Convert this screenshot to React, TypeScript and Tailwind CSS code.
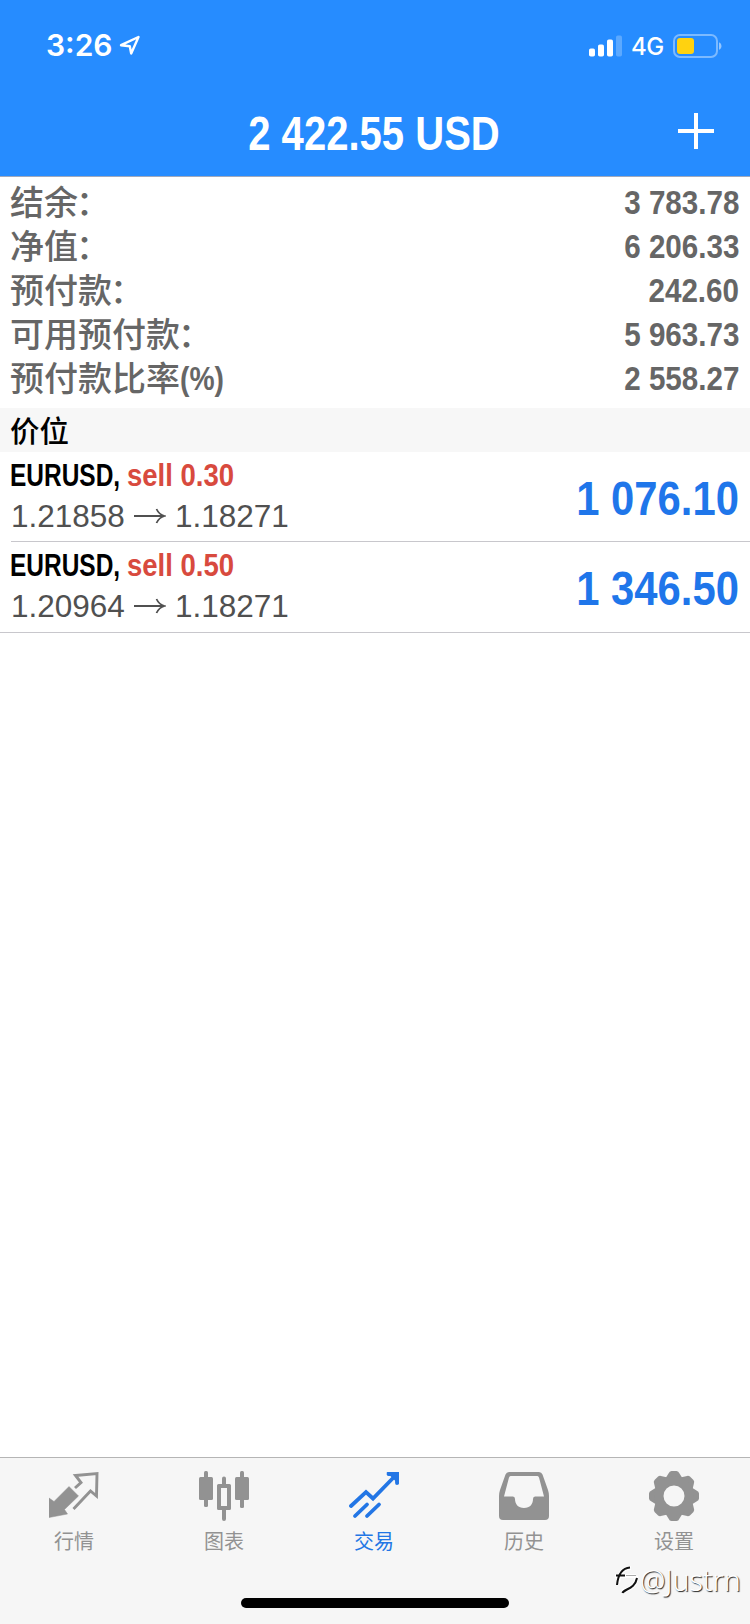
import React, { ReactNode } from 'react';

interface RowProps {
  label: string;
  suffix: string;
  value: string;
}

const balances: RowProps[] = [
  { label: '结余', suffix: '：', value: '3 783.78' },
  { label: '净值', suffix: '：', value: '6 206.33' },
  { label: '预付款', suffix: '：', value: '242.60' },
  { label: '可用预付款', suffix: '：', value: '5 963.73' },
  { label: '预付款比率', suffix: '(%)', value: '2 558.27' },
];

const positions = [
  { symbol: 'EURUSD,', side: 'sell 0.30', open: '1.21858', current: '1.18271', profit: '1 076.10' },
  { symbol: 'EURUSD,', side: 'sell 0.50', open: '1.20964', current: '1.18271', profit: '1 346.50' },
];

function StatusBar() {
  return (
    <div className="flex h-[92px] items-center justify-between pl-[46px] pr-[27px]">
      <div className="flex items-center">
        <span className="w-[69px] whitespace-nowrap pb-[2px] font-[Inter,sans-serif] text-[30px] font-semibold leading-none">3:26</span>
        <svg className="ml-[4px] h-[22px] w-[22px]" viewBox="0 0 22 22" fill="none" stroke="currentColor" strokeWidth="2.400" strokeLinejoin="round">
          <path d="M2 10.200 19.500 2 12.200 18.400 10.800 11.200Z" />
        </svg>
      </div>
      <div className="flex items-center">
        <svg className="h-[22px] w-[34px]" viewBox="0 0 34 22" fill="currentColor">
          <rect x="0" y="13.500" width="6" height="8" rx="1.800" />
          <rect x="9" y="9.500" width="6" height="12" rx="1.800" />
          <rect x="18" y="4.500" width="6" height="17" rx="1.800" />
          <rect x="27" y="0.500" width="6" height="21" rx="1.800" opacity="0.25" />
        </svg>
        <span className="ml-[8px] w-[33px] whitespace-nowrap pt-[2px] font-[Inter,sans-serif] text-[24px] font-medium leading-none tracking-[-0.5px]">4G</span>
        <svg className="ml-[9px] h-[24px] w-[50px]" viewBox="0 0 50 24" fill="none">
          <rect x="1" y="1" width="43" height="22" rx="6" stroke="white" strokeOpacity="0.4" strokeWidth="2" />
          <rect x="4" y="4" width="17" height="16" rx="3" fill="#ffd210" />
          <path d="M46 8.200c3.300 1.400 3.300 6.200 0 7.600z" fill="white" fillOpacity="0.5" />
        </svg>
      </div>
    </div>
  );
}

function Header() {
  return (
    <header className="h-[177px] border-b border-[#9fa9bd] bg-[#268cff] text-white">
      <StatusBar />
      <div className="grid h-[84px] grid-cols-[78px_1fr_80px] items-center">
        <span />
        <h1 className="origin-center scale-x-[0.843] whitespace-nowrap text-center text-[47.5px] font-bold leading-[84px]">2 422.55 USD</h1>
        <svg className="ml-[8px] h-[36px] w-[36px] -translate-y-[3px]" viewBox="0 0 36 36" stroke="currentColor" strokeWidth="4">
          <path d="M18 0V36M0 18H36" />
        </svg>
      </div>
    </header>
  );
}

function BalanceRow({ label, suffix, value }: RowProps) {
  return (
    <div className="flex h-[44px] items-center justify-between pl-[10px] pr-[11px] text-[34px] font-bold leading-[44px] text-[#666]">
      <div className="flex">
        <span className="-translate-y-px font-['Noto_Sans_CJK_SC',sans-serif] font-medium">{label}</span>
        {suffix === '(%)' ? (
          <span className="origin-left scale-x-[0.83]">{suffix}</span>
        ) : (
          <span className="-ml-[2px] -translate-y-px font-['Noto_Sans_CJK_SC',sans-serif] font-medium">{suffix}</span>
        )}
      </div>
      <span className="origin-right scale-x-[0.87]">{value}</span>
    </div>
  );
}

function MarketIcon() {
  return (
    <svg className="h-[50px] w-[50px]" viewBox="0 0 50 50">
      <path d="M20 15.500 29.500 25 15.500 38.500 18.500 43 0 46.500V27L5 30.500Z" fill="currentColor" strokeLinejoin="round" stroke="currentColor" strokeWidth="0.500" />
      <path d="M26 17 32 11.500 26.500 4.500 48 2.500 47.500 25 41.500 20 24.500 38" fill="none" stroke="currentColor" strokeWidth="2.900" />
    </svg>
  );
}

function ChartIcon() {
  return (
    <svg className="h-[50px] w-[50px]" viewBox="0 0 50 50" fill="currentColor">
      <rect x="5" y="0" width="4" height="36" rx="1.500" />
      <rect x="0" y="6" width="14" height="23" rx="1.500" />
      <rect x="41" y="0" width="4" height="37" rx="1.500" />
      <rect x="36" y="6" width="14" height="23" rx="1.500" />
      <path d="M23 7.500a2 2 0 0 1 4 0V13h3.500a1.500 1.500 0 0 1 1.500 1.500v23a1.500 1.500 0 0 1-1.500 1.500H27v9a2 2 0 0 1-4 0v-9h-3.500a1.500 1.500 0 0 1-1.500-1.500v-23a1.500 1.500 0 0 1 1.500-1.500H23zM22 17v18h6V17z" fillRule="evenodd" />
    </svg>
  );
}

function TradeIcon() {
  return (
    <svg className="h-[50px] w-[50px]" viewBox="0 0 50 50" fill="none" stroke="currentColor" strokeWidth="3.800" strokeLinecap="round">
      <path d="M2 35 17 21 24 27.500 47 4" />
      <path d="M39.500 3H48V12" />
      <path d="M42 3H48V9Z" fill="currentColor" />
      <path d="M6 45 18 33.500M18 45 30 33.500" />
    </svg>
  );
}

function HistoryIcon() {
  return (
    <svg className="h-[50px] w-[50px]" viewBox="0 0 50 50">
      <path
        fill="currentColor"
        fillRule="evenodd"
        d="M10 1H40Q42.500 1 43.500 3.500L49 19Q50 22 50 25V45Q50 49 46 49H4Q0 49 0 45V25Q0 22 1 19L6.500 3.500Q7.500 1 10 1ZM11.500 5Q10.500 5 10 6.500L5 25.500H14Q16 25.500 16 28C16 33 19 37 25 37C31 37 34 33 34 28Q34 25.500 36 25.500H45L40 6.500Q39.500 5 38.500 5Z"
      />
    </svg>
  );
}

function SettingsIcon() {
  return (
    <svg className="h-[50px] w-[50px]" viewBox="-25 -25 50 50">
      <g fill="currentColor">
        {[0, 45, 90, 135, 180, 225, 270, 315].map((angle) => (
          <path key={angle} transform={`rotate(${angle})`} d="M-8 -18.500 -5.500 -22.500Q-4.500 -25 -2.500 -25H2.500Q4.500 -25 5.500 -22.500L8 -18.500V-12H-8Z" />
        ))}
      </g>
      <circle r="15" fill="none" stroke="currentColor" strokeWidth="9" />
    </svg>
  );
}

interface TabProps {
  label: string;
  icon: ReactNode;
  active?: boolean;
}

function Tab({ label, icon, active = false }: TabProps) {
  return (
    <div className={`flex flex-col items-center pr-[2px] pt-[13px] ${active ? 'text-[#2376e5]' : 'text-[#929292]'}`}>
      {icon}
      <span className="mt-[6px] font-['Noto_Sans_CJK_SC',sans-serif] text-[20px] leading-[28px]">{label}</span>
    </div>
  );
}

function Watermark() {
  return (
    <div className="absolute left-[614px] top-[102px] flex w-[136px] items-center overflow-hidden">
      <svg className="h-[32px] w-[26px] shrink-0" viewBox="0 0 26 32" fill="none">
        <path d="M1 12H22M4 19C5 9 9 4 17 4M8 27C18 25 23 20 22 12" stroke="white" strokeWidth="4" />
        <path d="M2 11.500H11M3 21C4 11 8 4 16 3.500M8.500 29C10 25 21 25 23 14" stroke="#111" strokeWidth="2" />
        <path d="M12 11.500H22" stroke="#aaa" strokeWidth="1" />
      </svg>
      <span className="whitespace-nowrap font-['Noto_Sans',sans-serif] text-[28.5px] font-light leading-[40px] text-white [text-shadow:1px_1px_1px_#222]">@Justrn</span>
    </div>
  );
}

export default function App() {
  return (
    <div className="flex h-[1624px] w-[750px] flex-col overflow-hidden bg-white font-['Liberation_Sans',Arial,sans-serif]">
      <Header />

      <section className="h-[231px] pt-[3px]">
        {balances.map((row) => (
          <BalanceRow key={row.label} {...row} />
        ))}
      </section>

      <h2 className="h-[44px] bg-[#f7f7f7] pl-[10px] font-['Noto_Sans_CJK_SC',sans-serif] text-[29.5px] font-medium leading-[42px] text-black">价位</h2>

      <ul className="border-b border-[#c8c7cc]">
        {positions.map((p, i) => (
          <li key={p.side} className={`ml-[11px] flex justify-between pr-[11px] ${i > 0 ? 'h-[91px] border-t border-[#c8c7cc]' : 'h-[89px]'}`}>
            <div>
              <div className="-ml-[1px] flex h-[46px] text-[32px] font-bold leading-[46px]">
                <span className="w-[117px] origin-left scale-x-[0.765] whitespace-nowrap text-black">{p.symbol}</span>
                <span className="origin-left scale-x-[0.86] whitespace-nowrap text-[#d84a3e]">{p.side}</span>
              </div>
              <div className="flex h-[36px] items-center text-[31.5px] leading-[36px] text-[#505050]">
                <span>{p.open}</span>
                <svg className="mx-[9px] h-[16px] w-[32px]" viewBox="0 0 32 16" fill="none" stroke="currentColor" strokeWidth="1.800">
                  <path d="M0 8H30M22.500 1Q25 6.500 30.500 8Q25 9.500 22.500 15" />
                </svg>
                <span>{p.current}</span>
              </div>
            </div>
            <span className="origin-right scale-x-[0.88] text-[47.5px] font-bold leading-[93px] text-[#1f76ea]">{p.profit}</span>
          </li>
        ))}
      </ul>

      <nav className="relative mt-auto h-[167px] border-t border-[#b5b5b5] bg-[#f6f6f6]">
        <div className="grid grid-cols-5">
          <Tab label="行情" icon={<MarketIcon />} />
          <Tab label="图表" icon={<ChartIcon />} />
          <Tab label="交易" icon={<TradeIcon />} active />
          <Tab label="历史" icon={<HistoryIcon />} />
          <Tab label="设置" icon={<SettingsIcon />} />
        </div>
        <div className="absolute bottom-[16px] left-[241px] h-[10px] w-[268px] rounded-full bg-black" />
        <Watermark />
      </nav>
    </div>
  );
}
